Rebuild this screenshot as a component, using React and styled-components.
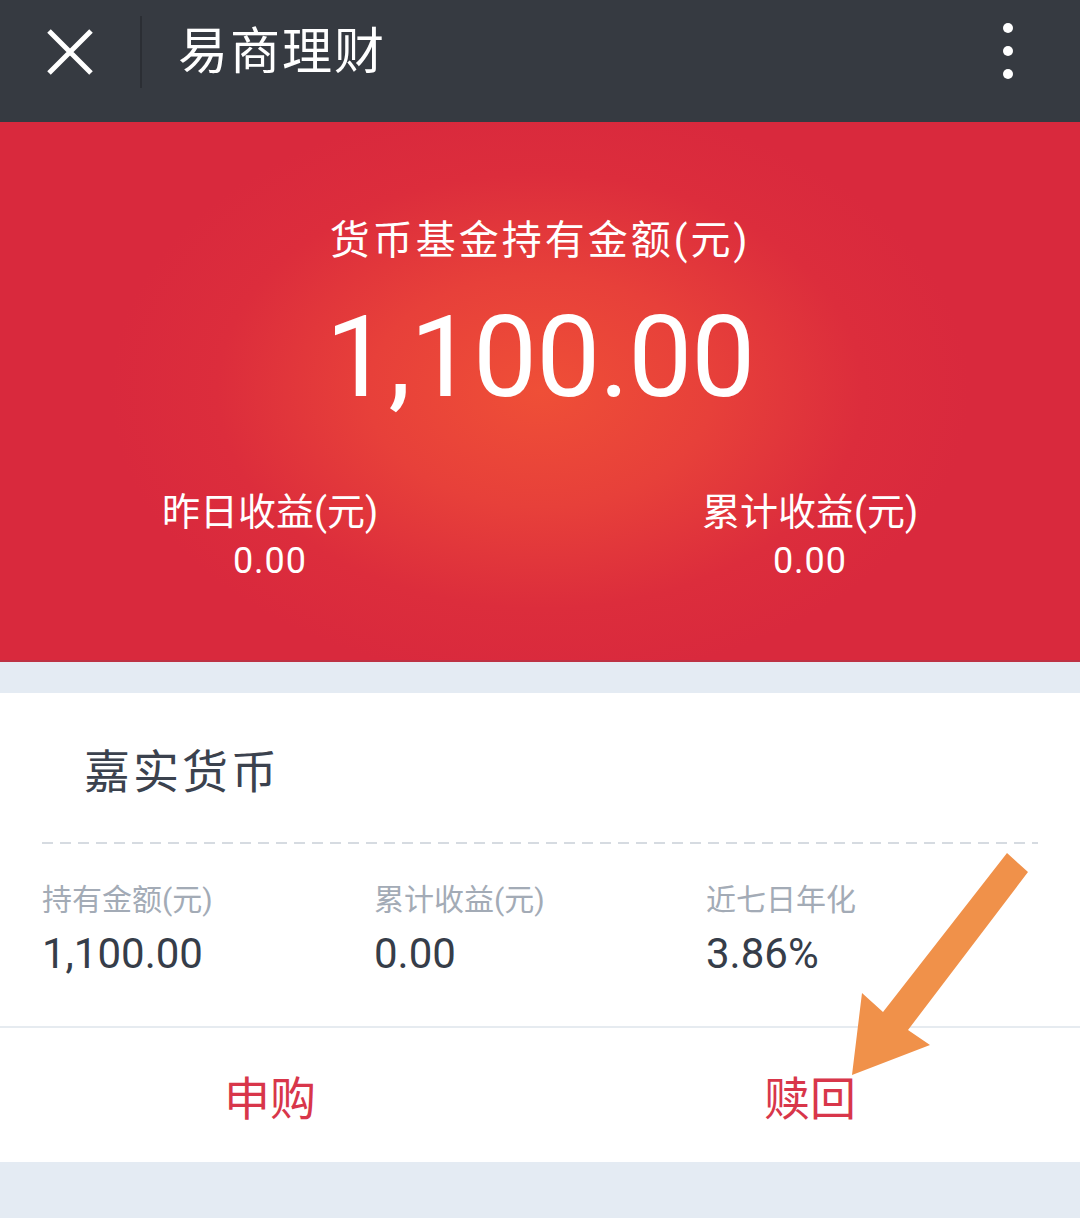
import React from 'react'
import styled, { createGlobalStyle } from 'styled-components'

const GlobalStyle = createGlobalStyle`
  html, body {
    margin: 0;
    padding: 0;
    background: #e4ebf3;
  }
  body {
    font-family: Roboto, "Noto Sans CJK SC", sans-serif;
  }
`

const Page = styled.div`
  position: relative;
  width: 1080px;
  min-height: 1218px;
  background: #e4ebf3;
`

const TopBar = styled.div`
  display: flex;
  align-items: center;
  height: 104px;
  padding: 0 0 18px 47px;
  background: #363a41;
`

const Divider = styled.div`
  width: 2px;
  height: 72px;
  margin: 0 36px 0 47px;
  background: #2b2e34;
`

const Title = styled.div`
  flex: 1;
  color: #fff;
  font-size: 50px;
  line-height: 56px;
  letter-spacing: 2px;
`

const MoreBtn = styled.div`
  width: 20px;
  margin-right: 62px;
  display: flex;
  justify-content: center;
`

const Hero = styled.div`
  height: 443px;
  padding-top: 95px;
  border-bottom: 2px solid #bd3244;
  background:
    radial-gradient(ellipse 430px 290px at 50% 50%, #ef4f37 0%, #e7403a 40%, #dc2d3c 75%, #d9293d 100%);
  color: #fff;
  text-align: center;
`

const HeroLabel = styled.div`
  font-size: 40px;
  line-height: 48px;
  letter-spacing: 3px;
`

const HeroAmount = styled.div`
  margin-top: 34px;
  font-size: 114px;
  line-height: 117px;
  letter-spacing: -1px;
`

const StatRow = styled.div`
  display: grid;
  grid-template-columns: 1fr 1fr;
  margin-top: 74px;
`

const StatLabel = styled.div`
  font-size: 38px;
  line-height: 44px;
`

const StatValue = styled.div`
  margin-top: 7px;
  font-size: 36px;
  line-height: 40px;
  letter-spacing: 1px;
`

const Card = styled.div`
  margin-top: 31px;
  background: #fff;
`

const FundName = styled.div`
  padding: 52px 0 0 84px;
  font-size: 46px;
  line-height: 54px;
  letter-spacing: 3px;
  color: #3b424e;
`

const Dashed = styled.div`
  height: 2px;
  margin: 43px 42px 0;
  background: repeating-linear-gradient(90deg, #d6dbe1 0 11px, transparent 11px 18px);
`

const Metrics = styled.div`
  display: grid;
  grid-template-columns: repeat(3, 332px);
  padding: 38px 0 48px 42px;
  border-bottom: 2px solid #e6ebf0;
`

const MetricLabel = styled.div`
  font-size: 30px;
  line-height: 36px;
  color: #a3abb6;
`

const MetricValue = styled.div`
  margin-top: 12px;
  font-size: 42px;
  line-height: 48px;
  color: #363d49;
`

const Actions = styled.div`
  display: grid;
  grid-template-columns: 1fr 1fr;
  height: 134px;
`

const ActionBtn = styled.div`
  display: flex;
  align-items: center;
  justify-content: center;
  font-size: 46px;
  color: #d8364a;
`

const Arrow = styled.svg`
  position: absolute;
  left: 0;
  top: 0;
  pointer-events: none;
`

export default function App() {
  return (
    <Page>
      <GlobalStyle />
      <TopBar>
        <svg width="46" height="46" viewBox="0 0 46 46">
          <path d="M2 2 L44 44 M44 2 L2 44" stroke="#fff" strokeWidth="5" fill="none" />
        </svg>
        <Divider />
        <Title>易商理财</Title>
        <MoreBtn>
          <svg width="12" height="58" viewBox="0 0 12 58">
            <circle cx="6" cy="5" r="5" fill="#fff" />
            <circle cx="6" cy="28" r="5" fill="#fff" />
            <circle cx="6" cy="51" r="5" fill="#fff" />
          </svg>
        </MoreBtn>
      </TopBar>

      <Hero>
        <HeroLabel>货币基金持有金额(元)</HeroLabel>
        <HeroAmount>1,100.00</HeroAmount>
        <StatRow>
          <div>
            <StatLabel>昨日收益(元)</StatLabel>
            <StatValue>0.00</StatValue>
          </div>
          <div>
            <StatLabel>累计收益(元)</StatLabel>
            <StatValue>0.00</StatValue>
          </div>
        </StatRow>
      </Hero>

      <Card>
        <FundName>嘉实货币</FundName>
        <Dashed />
        <Metrics>
          <div>
            <MetricLabel>持有金额(元)</MetricLabel>
            <MetricValue>1,100.00</MetricValue>
          </div>
          <div>
            <MetricLabel>累计收益(元)</MetricLabel>
            <MetricValue>0.00</MetricValue>
          </div>
          <div>
            <MetricLabel>近七日年化</MetricLabel>
            <MetricValue>3.86%</MetricValue>
          </div>
        </Metrics>
        <Actions>
          <ActionBtn>申购</ActionBtn>
          <ActionBtn>赎回</ActionBtn>
        </Actions>
      </Card>

      <Arrow width="1080" height="1218" viewBox="0 0 1080 1218">
        <polygon
          points="1007,853 1028,872 908,1030 930,1045 852,1075 862,993 883,1012"
          fill="#f0914a"
        />
      </Arrow>
    </Page>
  )
}
